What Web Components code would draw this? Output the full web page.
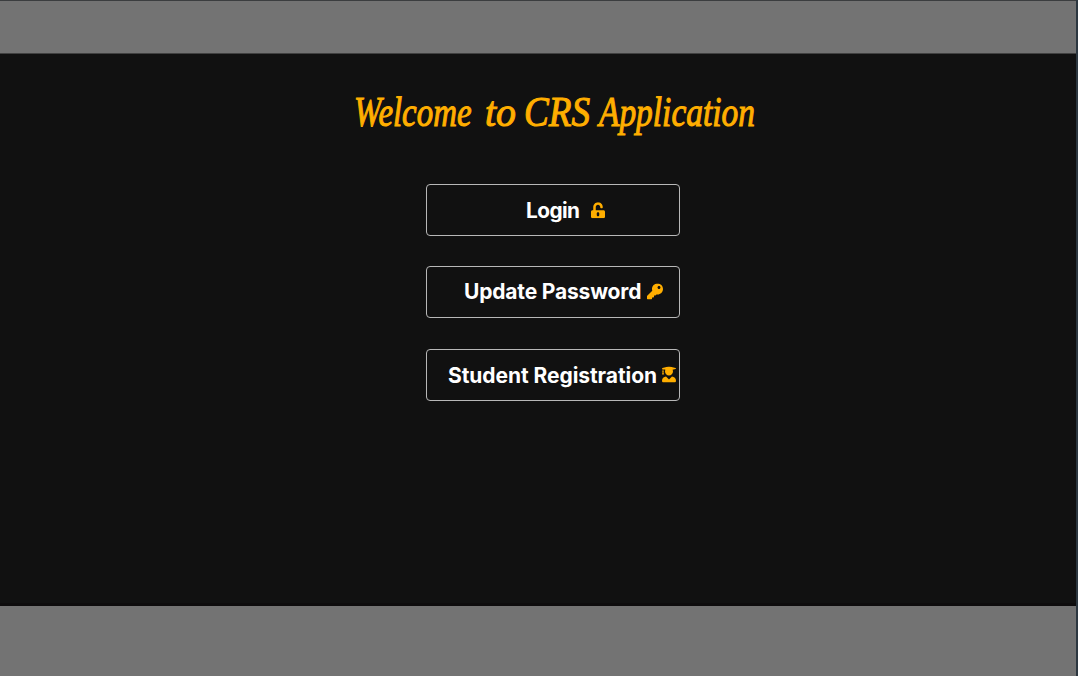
<!DOCTYPE html>
<html lang="en"><head><meta charset="utf-8"><title>CRS Application</title>
<style>html,body{margin:0;height:100%;overflow:hidden;background:#111}</style></head><body>
<crs-page>
<crs-title></crs-title>
<crs-button icon="unlock" style="--left:99px;--gap:12px;--size:20.8px;--ls:-.55px;--w:53px;--dy:1px">Login</crs-button>
<crs-button icon="key" style="--left:37px;--gap:5px;--ls:-.17px;--w:178px;--mt:30px;--dy:0px;--iy:-.5px">Update Password</crs-button>
<crs-button icon="graduate" style="--left:21px;--gap:4.2px;--ls:-.06px;--w:210px;--mt:31px;--dy:1px;--iy:-.5px">Student Registration</crs-button>
</crs-page>
<script>
const icons={
unlock:['0 0 448 512',14,'M400 256H152V152.9c0-39.6 31.7-72.5 71.3-72.9 40-.4 72.7 32.1 72.7 72v16c0 13.3 10.7 24 24 24h32c13.3 0 24-10.7 24-24v-16C376 68 307.5-.3 223.5 0 139.5.3 72 69.5 72 153.5V256H48c-26.5 0-48 21.5-48 48v160c0 26.5 21.5 48 48 48h352c26.5 0 48-21.5 48-48V304c0-26.5-21.5-48-48-48zM264 408c0 22.1-17.9 40-40 40s-40-17.9-40-40v-48c0-22.1 17.9-40 40-40s40 17.9 40 40v48z'],
key:['0 0 512 512',16,'M512 176C512 273.2 433.2 352 336 352c-11.2 0-22.2-1.1-32.8-3.1l-24 27A24 24 0 0 1 261.2 384H224v40c0 13.3-10.7 24-24 24h-40v40c0 13.3-10.7 24-24 24H24c-13.3 0-24-10.7-24-24v-78.1c0-6.3 2.5-12.4 7-16.9l161.8-161.8C163.1 213.8 160 195.3 160 176 160 78.8 238.8 0 336 0 433.5 0 512 78.5 512 176zM336 128c0 26.5 21.5 48 48 48s48-21.5 48-48-21.5-48-48-48-48 21.5-48 48z'],
graduate:['0 0 448 512',14,'M319.4 320.6L224 416l-95.4-95.4C57.1 323.7 0 382.2 0 454.4v9.6c0 26.5 21.5 48 48 48h352c26.5 0 48-21.5 48-48v-9.6c0-72.2-57.1-130.7-128.6-133.8zM13.6 79.8l6.4 1.5v58.4c-7 4.2-12 11.5-12 20.3 0 8.4 4.6 15.4 11.1 19.7L3.5 242c-1.7 6.9 2.1 14 7.6 14h41.8c5.5 0 9.3-7.1 7.6-14l-15.6-62.3C51.4 175.4 56 168.4 56 160c0-8.8-5-16.1-12-20.3V87.1l66 15.9c-8.6 17.2-14 36.4-14 57 0 70.7 57.3 128 128 128s128-57.3 128-128c0-20.6-5.3-39.8-14-57l96.3-23.2c18.2-4.4 18.2-27.1 0-31.5l-190.4-46c-13-3.1-26.7-3.1-39.7 0L13.6 48.2c-18.1 4.4-18.1 27.2 0 31.6z']};
customElements.define('crs-page',class extends HTMLElement{constructor(){super();this.attachShadow({mode:'open'}).innerHTML=`<style>
:host{display:flex;flex-direction:column;height:676px;width:1078px;box-sizing:border-box;border-right:2px solid #2c3740;background:#111}
header{height:54px;box-sizing:border-box;flex:none;background:#737373;border-top:1px solid #3b3d3f;border-bottom:1px solid #414141}
main{flex:1;display:flex;flex-direction:column;box-sizing:border-box;border-bottom:3px solid #0e0c0d}
footer{height:70px;flex:none;background:#737373}
</style><header></header><main><slot></slot></main><footer></footer>`}});
customElements.define('crs-title',class extends HTMLElement{constructor(){super();this.attachShadow({mode:'open'}).innerHTML=`<style>
:host{display:block;height:130px;box-sizing:border-box;padding:33px 0 0 354px}
h1{display:flex;margin:0;font:italic 400 43px/50px "Liberation Serif",serif;color:#ffae00;-webkit-text-stroke:1.1px #ffae00}
span{display:block;flex:none;width:var(--w);white-space:nowrap}
b{display:inline-block;font-weight:400;transform:scaleX(var(--s));transform-origin:0 50%}
</style><h1>
<span style="--w:131px;--s:.765"><b>Welcome</b></span>
<span style="--w:39px;--s:.927"><b>to</b></span>
<span style="--w:75px;--s:.863"><b>CRS</b></span>
<span style="--w:160px;--s:.777"><b>Application</b></span>
</h1>`}});
customElements.define('crs-button',class extends HTMLElement{connectedCallback(){const [v,w,p]=icons[this.getAttribute('icon')];this.attachShadow({mode:'open'}).innerHTML=`<style>
:host{display:block;margin:var(--mt,0) 0 0 426px;width:253.5px;height:52px}
button{display:flex;align-items:center;width:100%;height:100%;box-sizing:border-box;margin:0;padding:0 0 0 var(--left);border:1px solid #b8b8b8;border-radius:4px;background:#111;color:#fff;font:700 var(--size,21px)/28px "Inter",sans-serif;white-space:nowrap}
span{width:var(--w);flex:none;text-align:left;letter-spacing:var(--ls);transform:translateY(var(--dy,0))}
svg{display:block;flex:none;height:16px;margin-left:var(--gap);fill:#ffae00;transform:translateY(var(--iy,.3px))}
</style><button><span><slot></slot></span><svg width="${w}" viewBox="${v}"><path d="${p}"/></svg></button>`}});
</script></body></html>
